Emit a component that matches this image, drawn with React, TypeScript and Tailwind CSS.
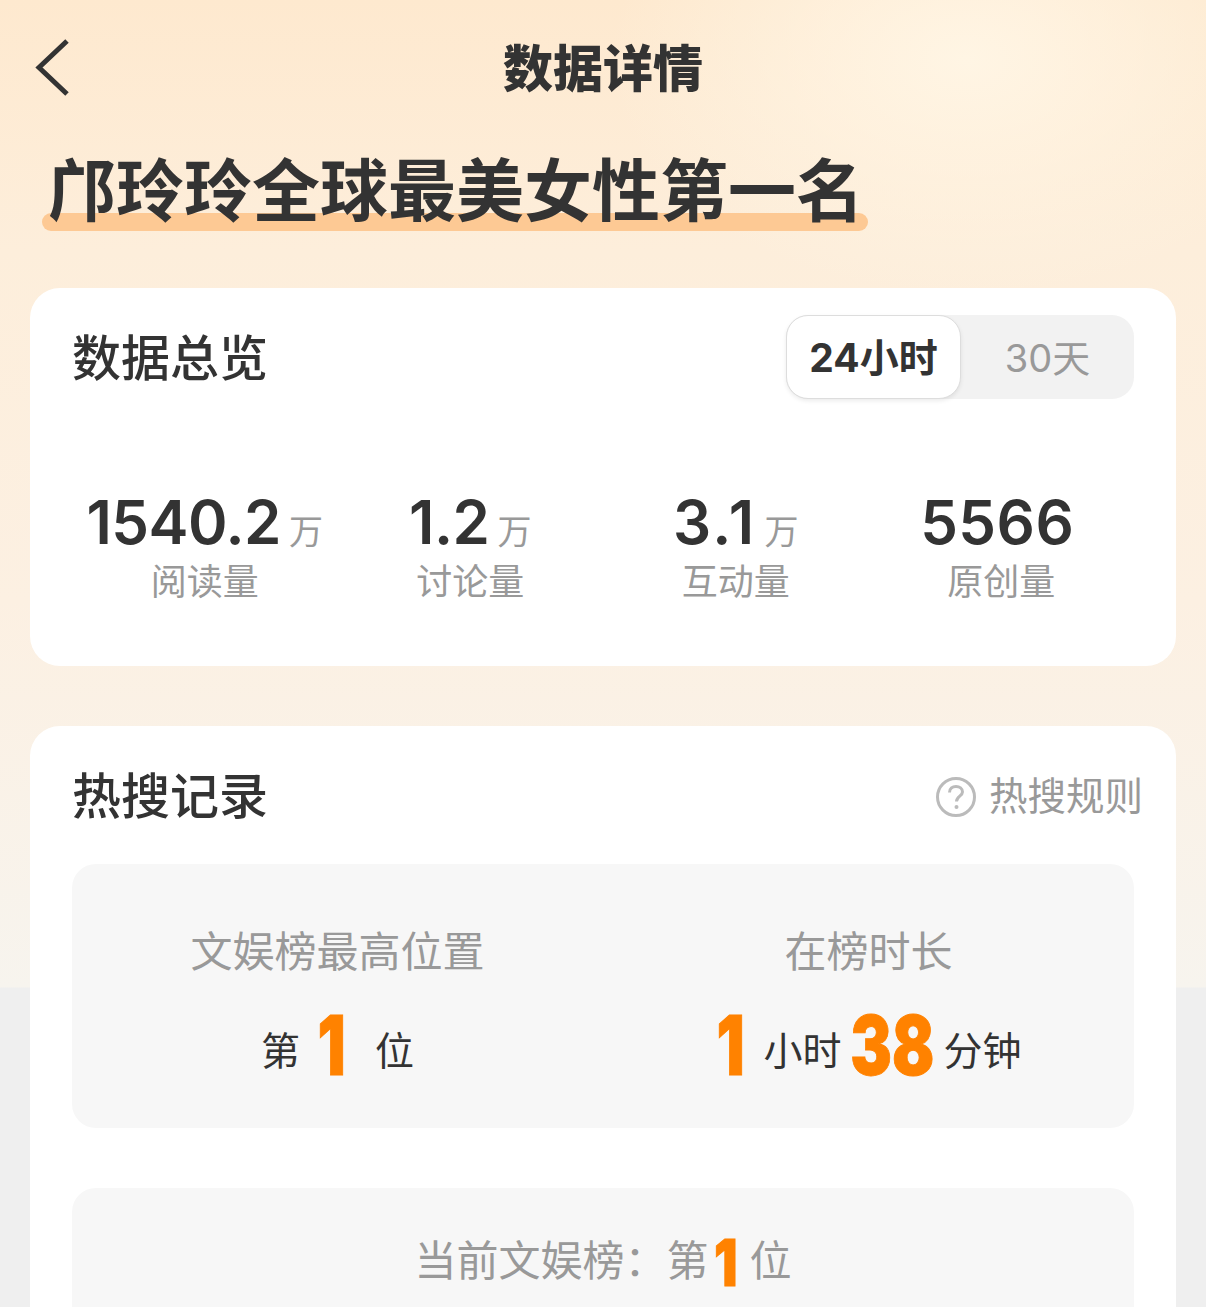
const cjk = 'font-["Inter","Noto_Sans_CJK_SC",sans-serif]'

const stats = [
  { value: '1540.2', unit: '万', label: '阅读量', tracking: 'tracking-[-0.5px]' },
  { value: '1.2', unit: '万', label: '讨论量', tracking: 'tracking-[-0.5px]' },
  { value: '3.1', unit: '万', label: '互动量', tracking: 'tracking-[2.5px]' },
  { value: '5566', unit: '', label: '原创量', tracking: 'tracking-[0.5px]' },
]

function BigNum({ children, small }: { children: string; small?: boolean }) {
  return (
    <span
      className={`inline-block origin-center font-black text-[#ff8200] leading-none [-webkit-text-stroke:1px_#ff8200] ${
        small ? 'mt-[4px] text-[65px] scale-x-[0.8]' : 'mb-[10px] text-[82px] scale-x-[0.76]'
      }`}
    >
      {children}
    </span>
  )
}

export default function App() {
  return (
    <div
      className={`${cjk} relative h-[1307px] w-[1206px] overflow-hidden bg-[linear-gradient(180deg,#fee9cf_0px,#fdeedb_250px,#fcf0e2_600px,#f7f4ee_987px,#efefef_988px)]`}
    >
      {/* top light wash */}
      <div className="pointer-events-none absolute right-0 top-0 h-[300px] w-[600px] bg-[radial-gradient(ellipse_at_60%_20%,#fff5e4_0%,transparent_70%)]" />

      <div className="relative">
        {/* Nav */}
        <div className="relative flex h-[136px] items-center justify-center pt-[2px]">
          <svg
            className="absolute left-[34px] top-[38px]"
            width="38"
            height="60"
            viewBox="0 0 38 60"
            fill="none"
          >
            <path d="M33 3 L5 29.500 L33 56" stroke="#333" strokeWidth="5" />
          </svg>
          <h1 className="text-[50px] font-black leading-none text-[#333]">数据详情</h1>
        </div>

        {/* Topic title */}
        <div className="mt-[13px] pl-[48px]">
          <div className="relative inline-block">
            <div className="absolute bottom-[2px] left-[-6px] right-[-4px] h-[18px] rounded-full bg-[#fdc994]" />
            <h2 className="relative text-[68px] font-bold leading-[84px] text-[#333]">
              邝玲玲全球最美女性第一名
            </h2>
          </div>
        </div>

        {/* Overview */}
        <section className="mx-[30px] mt-[55px] h-[378px] rounded-[30px] bg-white px-[42px] pt-[27px]">
          <div className="flex items-center justify-between">
            <h3 className="pt-[4px] text-[49px] font-medium leading-[80px] text-[#333]">数据总览</h3>
            <div className="flex h-[84px] w-[348px] rounded-[22px] bg-[#f2f2f2]">
              <div className="flex h-[84px] w-[175px] items-center justify-center rounded-[22px] border border-[#dddddd] bg-white pt-[3px] text-[39px] font-bold text-[#333] shadow-[0_2px_4px_rgba(0,0,0,0.08)]">
                24小时
              </div>
              <div className="flex flex-1 items-center justify-center pt-[3px] text-[38px] text-[#999]">30天</div>
            </div>
          </div>
          <div className="mt-[92px] grid grid-cols-4">
            {stats.map((s) => (
              <div key={s.label} className="flex flex-col items-center">
                <div className="flex h-[62px] items-baseline gap-[8px] leading-[62px]">
                  <span className={`text-[60px] font-semibold text-[#333] ${s.tracking}`}>{s.value}</span>
                  <span className="text-[34px] text-[#999]">{s.unit}</span>
                </div>
                <div className="mt-[6px] text-[36px] leading-[46px] text-[#999]">{s.label}</div>
              </div>
            ))}
          </div>
        </section>

        {/* Hot search record */}
        <section className="mx-[30px] mt-[60px] rounded-[30px] bg-white px-[42px] pb-[40px] pt-[27px]">
          <div className="flex items-center justify-between">
            <h3 className="pt-[4px] text-[49px] font-medium leading-[80px] text-[#333]">热搜记录</h3>
            <div className="mr-[-9px] mt-[3px] flex items-center gap-[13px]">
              <svg width="40" height="40" viewBox="0 0 40 40" fill="none">
                <circle cx="20" cy="20" r="18.500" stroke="#bbb" strokeWidth="3" />
                <path
                  d="M13.500 15.500 C13.500 11.500 16.500 9.500 20 9.500 C23.500 9.500 26.500 11.500 26.500 15 C26.500 19 20.500 19.500 20.500 24.500"
                  stroke="#bbb"
                  strokeWidth="3"
                />
                <circle cx="20.500" cy="30" r="2" fill="#bbb" />
              </svg>
              <span className="text-[38.500px] text-[#999]">热搜规则</span>
            </div>
          </div>

          <div className="mt-[27px] grid h-[264px] grid-cols-2 rounded-[24px] bg-[#f7f7f7]">
            <div className="flex flex-col items-center pt-[60px]">
              <div className="text-[42px] leading-[56px] text-[#999]">文娱榜最高位置</div>
              <div className="mt-[33px] flex h-[76px] items-center text-[39px] text-[#333]">
                <span>第</span>
                <span className="flex w-[75px] justify-center pr-[12px]"><BigNum>1</BigNum></span>
                <span>位</span>
              </div>
            </div>
            <div className="flex flex-col items-center pt-[60px]">
              <div className="text-[42px] leading-[56px] text-[#999]">在榜时长</div>
              <div className="mt-[33px] flex h-[76px] items-center text-[39px] text-[#333]">
                <span className="flex w-[48px] justify-center pr-[18px]"><BigNum>1</BigNum></span>
                <span>小时</span>
                <span className="flex w-[102px] justify-center"><BigNum>38</BigNum></span>
                <span>分钟</span>
              </div>
            </div>
          </div>

          <div className="mt-[60px] flex h-[200px] justify-center rounded-[24px] bg-[#f7f7f7] pt-[40px]">
            <div className="flex h-[64px] items-center text-[42px] text-[#999]">
              <span>当前文娱榜：</span>
              <span>第</span>
              <span className="flex w-[41px] justify-center pr-[6px]"><BigNum small>1</BigNum></span>
              <span>位</span>
            </div>
          </div>
        </section>
      </div>
    </div>
  )
}
